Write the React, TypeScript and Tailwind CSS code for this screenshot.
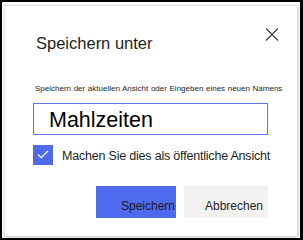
import React from 'react';

const CloseIcon = () => (
  <svg width="14" height="13" viewBox="0 0 14 13" fill="none">
    <path d="M1 0.5 L13 12.5 M13 0.5 L1 12.5" stroke="#3b3b3b" strokeWidth="1.1" />
  </svg>
);

const CheckIcon = () => (
  <svg width="12" height="9" viewBox="0 0 12 9" fill="none">
    <path d="M1 4.5 L4.2 7.6 L11 1" stroke="#ffffff" strokeWidth="1.2" />
  </svg>
);

const App = () => {
  return (
    <div className="w-[303px] h-[240px] box-border bg-white border-black border-l-2 border-t-2 border-r-[3px] border-b-2 pl-[2px] pt-[3px]">
      <div className="relative w-[293px] h-[231px] bg-white border-l border-t border-[#e3e3e3] shadow-[1px_1px_3px_rgba(0,0,0,0.25)] pl-[28px] pt-[25px] font-['Liberation_Sans',Arial,sans-serif] text-[#201f1e]">
        <div className="h-[24px] leading-[24px] text-[16.5px] pl-[3px]">Speichern unter</div>
        <button className="absolute left-[260px] top-[22px]">
          <CloseIcon />
        </button>

        <div className="mt-[29px] h-[10px] leading-[10px] text-[8px] [word-spacing:0.4px] whitespace-nowrap pl-[2px]">
          Speichern der aktuellen Ansicht oder Eingeben eines neuen Namens
        </div>

        <div className="mt-[9px] w-[235px] h-[32px] border border-[#5b74e8] pl-[15px] flex items-center">
          <span className="text-[21.5px] leading-none text-black pt-[3px]">Mahlzeiten</span>
        </div>

        <div className="mt-[8px] flex items-center gap-[9px]">
          <div className="w-[20px] h-[20px] bg-[#4f6bed] flex items-center justify-center">
            <CheckIcon />
          </div>
          <span className="text-[12.5px] tracking-[-0.2px] leading-[20px] mt-[3px]">Machen Sie dies als öffentliche Ansicht</span>
        </div>

        <div className="mt-[20px] ml-[63px] flex gap-[8px]">
          <button className="w-[80px] h-[32px] bg-[#4f6bed] text-[12px] leading-[18px] text-[#1b1a19] pl-[25px] pt-[8px] text-left whitespace-nowrap">
            Speichern
          </button>
          <button className="w-[84px] h-[32px] bg-[#f3f2f1] text-[12px] leading-[18px] text-[#201f1e] pl-[21px] pt-[8px] text-left whitespace-nowrap">
            Abbrechen
          </button>
        </div>
      </div>
    </div>
  );
};

export default App;
